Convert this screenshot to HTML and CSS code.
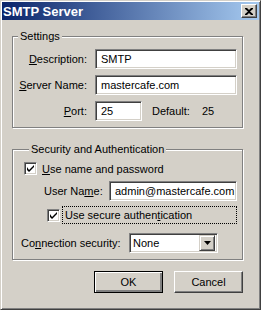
FILE: index.html
```html
<!DOCTYPE html>
<html lang="en">
<head>
    <meta charset="UTF-8">
    <title>SMTP Server</title>
    <link rel="stylesheet" href="styles.css">
</head>
<body>
    <div class="window">
        <div class="titlebar">
            <span class="title">SMTP Server</span>
            <button class="close-btn">
                <svg width="8" height="7" viewBox="0 0 8 7">
                    <path d="M0 0h2l2 2 2-2h2v1L5 3.5 8 6v1H6L4 5 2 7H0V6l3-2.5L0 1z" fill="#000"/>
                </svg>
            </button>
        </div>

        <div class="dialog-body">
            <fieldset class="group settings">
                <legend>Settings</legend>
                <div class="form-grid">
                    <label for="description"><u>D</u>escription:</label>
                    <input type="text" id="description" class="textbox" value="SMTP">

                    <label for="server"><u>S</u>erver Name:</label>
                    <input type="text" id="server" class="textbox" value="mastercafe.com">

                    <label for="port"><u>P</u>ort:</label>
                    <div class="port-row">
                        <input type="text" id="port" class="textbox port" value="25">
                        <span class="default-label">Default:</span>
                        <span>25</span>
                    </div>
                </div>
            </fieldset>

            <fieldset class="group security">
                <legend>Security and Authentication</legend>

                <div class="check-row">
                    <span class="checkbox checked"></span>
                    <span><u>U</u>se name and password</span>
                </div>

                <div class="user-row">
                    <label for="username">User Na<u>m</u>e:</label>
                    <input type="text" id="username" class="textbox" value="admin@mastercafe.com">
                </div>

                <div class="check-row secure">
                    <span class="checkbox checked"></span>
                    <span class="focus-label">Use secure authen<u>t</u>ication</span>
                </div>

                <div class="conn-row">
                    <label>Co<u>n</u>nection security:</label>
                    <div class="dropdown">
                        <span class="dropdown-value">None</span>
                        <span class="dropdown-btn">
                            <svg width="7" height="4" viewBox="0 0 7 4"><path d="M0 0h7L3.5 4z" fill="#000"/></svg>
                        </span>
                    </div>
                </div>
            </fieldset>

            <div class="buttons">
                <button class="btn default">OK</button>
                <button class="btn">Cancel</button>
            </div>
        </div>
    </div>
</body>
</html>
```

FILE: styles.css
```css
body {
    margin: 0;
    font-family: "Liberation Sans", Arial, sans-serif;
    font-size: 11px;
    color: #000;
    background-color: #d4d0c8;
}
.window {
    width: 261px;
    height: 310px;
    box-sizing: border-box;
    background-color: #d4d0c8;
    border: 1px solid;
    border-color: #d4d0c8 #404040 #404040 #d4d0c8;
    box-shadow: inset 1px 1px #fff, inset -1px -1px #808080;
    padding: 1px;
}
.titlebar {
    height: 18px;
    display: flex;
    align-items: center;
    justify-content: space-between;
    padding: 0 2px 0 1px;
    background: linear-gradient(to right, #0a246a, #a6caf0);
}
.title {
    color: #fff;
    font-weight: bold;
    font-size: 13px;
}
.close-btn {
    width: 16px;
    height: 14px;
    padding: 0;
    display: flex;
    align-items: center;
    justify-content: center;
    background-color: #d4d0c8;
    border: 1px solid;
    border-color: #fff #404040 #404040 #fff;
    box-shadow: inset -1px -1px #808080;
}
.dialog-body {
    padding: 10px 0 0 10px;
}
.group {
    width: 231px;
    min-width: 0;
    box-sizing: border-box;
    margin: 0;
    padding: 6px 5px 6px 0;
    border: 1px solid #808080;
    box-shadow: inset 1px 1px #fff, 1px 1px #fff;
}
.group legend {
    padding: 0 2px;
    margin-left: 5px;
    line-height: 13px;
    background-color: #d4d0c8;
}
.form-grid {
    display: grid;
    grid-template-columns: 74px 1fr;
    column-gap: 8px;
    row-gap: 6px;
    align-items: center;
}
.form-grid label {
    text-align: right;
}
.textbox {
    height: 20px;
    min-width: 0;
    box-sizing: border-box;
    margin: 0;
    padding: 0 0 0 5px;
    font-family: inherit;
    font-size: 11px;
    color: #000;
    background-color: #fff;
    border: 1px solid;
    border-color: #808080 #fff #fff #808080;
    box-shadow: inset 1px 1px #404040, inset -1px -1px #d4d0c8;
    outline: none;
    width: 100%;
}
.port-row {
    display: flex;
    align-items: center;
}
.textbox.port {
    width: 47px;
}
.default-label {
    margin: 0 10px;
    width: 40px;
}
.security {
    margin-top: 15px;
    padding: 5px 5px 6px 11px;
}
.check-row {
    display: flex;
    align-items: center;
    gap: 5px;
    height: 15px;
}
.checkbox {
    width: 13px;
    height: 13px;
    flex-shrink: 0;
    box-sizing: border-box;
    background-color: #fff;
    border: 1px solid;
    border-color: #808080 #fff #fff #808080;
    box-shadow: inset 1px 1px #404040, inset -1px -1px #d4d0c8;
    display: inline-block;
}
.checkbox.checked {
    background-image: url("data:image/svg+xml,%3Csvg xmlns='http://www.w3.org/2000/svg' width='11' height='11'%3E%3Cpath d='M2 4v3l2 2 5-5V2L4 7z' fill='%23000'/%3E%3C/svg%3E");
    background-repeat: no-repeat;
}
.user-row {
    display: flex;
    align-items: center;
    margin: 5px 0 0 20px;
}
.user-row label {
    width: 65px;
    flex-shrink: 0;
}
.user-row .textbox {
    flex: 1;
    width: auto;
}
.check-row.secure {
    margin: 5px 0 0 23px;
    height: 18px;
    gap: 2px;
}
.focus-label {
    flex: 1;
    height: 18px;
    line-height: 16px;
    box-sizing: border-box;
    padding-left: 2px;
    border: 1px dotted #000;
}
.conn-row {
    display: flex;
    align-items: center;
    margin: 9px 0 0 -3px;
}
.conn-row label {
    width: 108px;
}
.dropdown {
    width: 89px;
    height: 20px;
    box-sizing: border-box;
    display: flex;
    align-items: center;
    background-color: #fff;
    border: 1px solid;
    border-color: #808080 #fff #fff #808080;
    box-shadow: inset 1px 1px #404040, inset -1px -1px #d4d0c8;
    padding: 2px 2px 2px 3px;
}
.dropdown-value {
    flex: 1;
}
.dropdown-btn {
    width: 16px;
    height: 16px;
    box-sizing: border-box;
    display: flex;
    align-items: center;
    justify-content: center;
    background-color: #d4d0c8;
    border: 1px solid;
    border-color: #d4d0c8 #404040 #404040 #d4d0c8;
    box-shadow: inset 1px 1px #fff, inset -1px -1px #808080;
}
.buttons {
    display: flex;
    justify-content: flex-end;
    gap: 11px;
    width: 231px;
    margin-top: 11px;
}
.btn {
    width: 69px;
    height: 22px;
    box-sizing: border-box;
    padding: 0;
    font-family: inherit;
    font-size: 11px;
    color: #000;
    background-color: #d4d0c8;
    border: 1px solid;
    border-color: #fff #404040 #404040 #fff;
    box-shadow: inset -1px -1px #808080;
}
.btn.default {
    border: 1px solid #000;
    box-shadow: inset 1px 1px #fff, inset -2px -2px #808080, inset -1px -1px #404040;
}
```
